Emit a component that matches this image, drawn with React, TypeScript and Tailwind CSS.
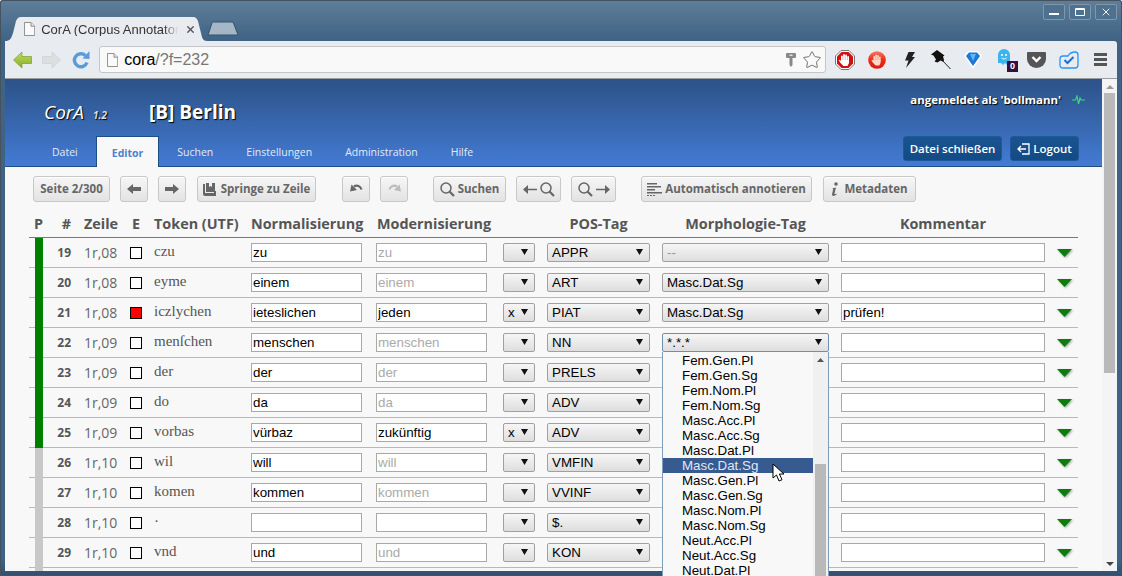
import type { ReactNode } from "react";
import { Star, X } from "lucide-react";

type Row = {
  id: number;
  line: string;
  token: string;
  norm: string;
  mod: string;
  modSet?: boolean;
  flag?: string;
  pos: string;
  morph?: string;
  morphMuted?: boolean;
  checked?: boolean;
  done?: boolean;
  comment?: string;
  open?: boolean;
};

const rows: Row[] = [
  { id: 19, line: "1r,08", token: "czu", norm: "zu", mod: "zu", pos: "APPR", morph: "--", morphMuted: true, done: true },
  { id: 20, line: "1r,08", token: "eyme", norm: "einem", mod: "einem", pos: "ART", morph: "Masc.Dat.Sg", done: true },
  { id: 21, line: "1r,08", token: "iczlychen", norm: "ieteslichen", mod: "jeden", modSet: true, flag: "x", pos: "PIAT", morph: "Masc.Dat.Sg", checked: true, done: true, comment: "prüfen!" },
  { id: 22, line: "1r,09", token: "menſchen", norm: "menschen", mod: "menschen", pos: "NN", morph: "*.*.*", done: true, open: true },
  { id: 23, line: "1r,09", token: "der", norm: "der", mod: "der", pos: "PRELS", done: true },
  { id: 24, line: "1r,09", token: "do", norm: "da", mod: "da", pos: "ADV", done: true },
  { id: 25, line: "1r,09", token: "vorbas", norm: "vürbaz", mod: "zukünftig", modSet: true, flag: "x", pos: "ADV", done: true },
  { id: 26, line: "1r,10", token: "wil", norm: "will", mod: "will", pos: "VMFIN" },
  { id: 27, line: "1r,10", token: "komen", norm: "kommen", mod: "kommen", pos: "VVINF" },
  { id: 28, line: "1r,10", token: "·", norm: "", mod: "", pos: "$." },
  { id: 29, line: "1r,10", token: "vnd", norm: "und", mod: "und", pos: "KON" },
];

const morphOptions = [
  "Fem.Gen.Pl", "Fem.Gen.Sg", "Fem.Nom.Pl", "Fem.Nom.Sg", "Masc.Acc.Pl", "Masc.Acc.Sg", "Masc.Dat.Pl", "Masc.Dat.Sg",
  "Masc.Gen.Pl", "Masc.Gen.Sg", "Masc.Nom.Pl", "Masc.Nom.Sg", "Neut.Acc.Pl", "Neut.Acc.Sg", "Neut.Dat.Pl",
];

function Select({ value, width, muted, focus }: { value?: string; width: string; muted?: boolean; focus?: boolean }) {
  return (
    <div
      className={`${width} h-[19px] shrink-0 flex items-center justify-between pl-[4px] pr-[6px] rounded-[2px] border bg-gradient-to-b from-[#f6f6f6] to-[#dedede] text-[13.33px] leading-none font-['Liberation_Sans',sans-serif] ${
        focus ? "border-[#6f8fb0]" : "border-[#a0a0a0]"
      } ${muted ? "text-[#999]" : "text-black"}`}
    >
      <span>{value}</span>
      <svg width="7" height="6" viewBox="0 0 7 6" className="shrink-0 -mt-[2px]">
        <path d="M0 0h7L3.500 6z" fill="#111" />
      </svg>
    </div>
  );
}

function TextField({ value, width, muted }: { value: string; width: string; muted?: boolean }) {
  return (
    <input
      readOnly
      value={value}
      className={`${width} h-[19px] shrink-0 px-[1px] bg-white border border-[#a9a9a9] text-[13.33px] outline-none font-['Liberation_Sans',sans-serif] ${
        muted ? "text-[#aaa]" : "text-black"
      }`}
    />
  );
}

function MorphDropdown() {
  return (
    <div className="absolute left-0 top-[19px] w-[167px] h-[230px] flex bg-[#f8f8f8] border border-t-0 border-[#7f9db9] text-[13.33px] leading-[15px] text-black font-['Liberation_Sans',sans-serif] z-10">
      <ul className="w-[150px] h-full pt-px overflow-hidden">
        {morphOptions.map((o) => (
          <li
            key={o}
            className={`h-[15px] pl-[19px] ${o === "Masc.Dat.Sg" ? "bg-[#375a91] text-[#dfe8f7]" : ""}`}
          >
            {o}
          </li>
        ))}
      </ul>
      <div className="w-[15px] h-full flex flex-col items-center bg-[#f0f0f0]">
        <svg width="7" height="4" viewBox="0 0 7 4" className="mt-[6px]">
          <path d="M0 4L3.500 0 7 4z" fill="#555" />
        </svg>
        <div className="w-[11px] flex-1 mt-[102px] bg-[#b9b9b9]" />
      </div>
      <svg width="13" height="20" viewBox="0 0 13 20" className="absolute left-[109px] top-[111px] z-20">
        <path d="M1 1v14l3.500-3 2.500 6 3-1.300-2.600-5.700H12z" fill="#fff" stroke="#000" strokeWidth="1" />
      </svg>
    </div>
  );
}

function TableRow({ row }: { row: Row }) {
  return (
    <div className="flex items-center h-[30px] pl-[6px] border-b border-[#b8b8b8]">
      <div className={`w-[8px] self-stretch -mb-px ${row.done ? "bg-[#008000]" : "bg-[#c8c8c8]"}`} />
      <div className="w-[28px] text-right text-[12px] font-bold text-[#555]">{row.id}</div>
      <div className="w-[33px] ml-[13px] text-[14px] text-[#666]">{row.line}</div>
      <div className={`w-[12px] h-[12px] ml-[13px] border border-black ${row.checked ? "bg-[#ff0000]" : "bg-white"}`} />
      <div className="w-[97px] ml-[12px] -mt-[3px] text-[15px] text-[#555] font-['Liberation_Serif',serif]">{row.token}</div>
      <TextField value={row.norm} width="w-[111px]" />
      <div className="w-[14px]" />
      <TextField value={row.mod} width="w-[111px]" muted={!row.modSet} />
      <div className="w-[16px]" />
      <Select value={row.flag} width="w-[32px]" />
      <div className="w-[12px]" />
      <Select value={row.pos} width="w-[103px]" />
      <div className="w-[12px]" />
      <div className="relative w-[167px] h-[19px] shrink-0">
        {row.morph && <Select value={row.morph} width="w-[167px]" muted={row.morphMuted} focus={row.open} />}
        {row.open && <MorphDropdown />}
      </div>
      <div className="w-[12px]" />
      <TextField value={row.comment ?? ""} width="w-[204px]" />
      <svg width="15" height="8" viewBox="0 0 15 8" className="ml-[12px] shrink-0 drop-shadow-[1px_1px_1px_rgba(0,0,0,0.35)]">
        <path d="M0 0h15L7.500 8z" fill="#0b7d0b" />
      </svg>
    </div>
  );
}

function ToolButton({ width, gap = "gap-[3px]", children }: { width: string; gap?: string; children: ReactNode }) {
  return (
    <div
      className={`${width} ${gap} h-[26px] flex items-center justify-center rounded-[3px] border border-[#c8c8c8] bg-gradient-to-b from-[#f6f6f6] to-[#e3e3e3] text-[11.5px] font-bold text-[#666] whitespace-nowrap shadow-[inset_0_1px_0_#fff]`}
    >
      {children}
    </div>
  );
}

const ArrowIcon = ({ dir }: { dir: "left" | "right" }) => (
  <svg width="14" height="10" viewBox="0 0 14 10">
    <path d={dir === "left" ? "M0 5l6-5v3h8v4H6v3z" : "M14 5L8 0v3H0v4h8v3z"} fill="#666" />
  </svg>
);

const SearchIcon = () => (
  <svg width="15" height="15" viewBox="0 0 15 15" fill="none" stroke="#666" strokeWidth="1.500">
    <circle cx="6" cy="6" r="5" />
    <path d="M9.500 9.500L14 14" strokeWidth="2.200" />
  </svg>
);

const ThinArrow = ({ dir }: { dir: "left" | "right" }) => (
  <svg width="14" height="9" viewBox="0 0 14 9">
    <path d={dir === "left" ? "M0 4.500L5 0v3.700h9v1.600H5V9z" : "M14 4.500L9 0v3.700H0v1.600h9V9z"} fill="#666" />
  </svg>
);

const UndoIcon = ({ flip, color }: { flip?: boolean; color: string }) => (
  <svg width="13" height="12" viewBox="0 0 13 12" className={flip ? "-scale-x-100" : ""} fill="none">
    <path d="M11.500 6.500C10.500 3 7 1.500 4 3.500" stroke={color} strokeWidth="2.200" />
    <path d="M0 8.500L1.500 1.500 7 7z" fill={color} />
  </svg>
);

function DocIcon({ size }: { size: number }) {
  return (
    <svg width={size * 0.8} height={size} viewBox="0 0 12 15" className="shrink-0">
      <path d="M.5.500h7l4 4v10H.500z" fill="#fafafa" stroke="#888" />
      <path d="M7.500.500v4h4" fill="#e8e8e8" stroke="#888" />
    </svg>
  );
}

// open hand used by the two blocker icons, drawn in a 20x20 box
function Hand({ fill }: { fill: string }) {
  return (
    <g fill={fill}>
      <rect x="6" y="5.500" width="1.800" height="6" rx="0.900" />
      <rect x="8.100" y="4" width="1.800" height="7" rx="0.900" />
      <rect x="10.200" y="4.500" width="1.800" height="7" rx="0.900" />
      <rect x="12.300" y="6" width="1.700" height="6" rx="0.850" />
      <path d="M6 10h8v3l-1.500 3h-4L5.500 13 3.800 10.500l1-.8L6 11z" />
    </g>
  );
}

function ChromeExtensions() {
  return (
    <div className="flex items-center h-full shrink-0">
      {/* stop sign */}
      <svg width="20" height="20" viewBox="0 0 20 20" className="ml-[9px]">
        <path d="M6 .500h8L19.500 6v8L14 19.500H6L.500 14V6z" fill="#fff" stroke="#777" />
        <path d="M6.500 2h7L18 6.500v7L13.500 18h-7L2 13.500v-7z" fill="#d40f0f" />
        <Hand fill="#fff" />
      </svg>
      {/* red hand */}
      <svg width="18" height="18" viewBox="0 0 20 20" className="ml-[13px]">
        <defs>
          <linearGradient id="redHand" x1="0" y1="0" x2="0" y2="1">
            <stop offset="0" stopColor="#f47a60" />
            <stop offset="0.5" stopColor="#ee2a18" />
            <stop offset="1" stopColor="#d81a10" />
          </linearGradient>
        </defs>
        <circle cx="10" cy="10" r="9.800" fill="url(#redHand)" />
        <Hand fill="#ffd8cc" />
      </svg>
      {/* bolt */}
      <svg width="10" height="16" viewBox="0 0 10 16" className="ml-[19px]">
        <path d="M3.500 0H10L7 5h3L1 16l2.500-7.500H0z" fill="#222" />
      </svg>
      {/* pin */}
      <svg width="20" height="20" viewBox="0 0 20 20" className="ml-[16px]">
        <path d="M6 0L0 4.500l2.500 1 2.500 4-1.500 2 3 1 3-2 3 1.500 .5-2-1-3.500 1.500-1z" fill="#111" />
        <path d="M10 9l9.500 10" stroke="#222" strokeWidth="1" />
      </svg>
      {/* diamond */}
      <svg width="18" height="19" viewBox="0 0 18 19" className="ml-[13px]">
        <path d="M4 1h10l4 5-9 13L0 6z" fill="#fff" />
        <path d="M5 2.500h8L16 6l-7 10L2 6z" fill="#1b78d8" />
        <path d="M6 4h6L9 11z" fill="#63b6f5" />
      </svg>
      {/* ghost with badge */}
      <div className="relative w-[22px] h-[24px] ml-[15px]">
        <svg width="14" height="18" viewBox="0 0 14 18" className="absolute left-0 top-0">
          <path d="M1 7a6 6 0 0112 0v8h-1.500l-1.500 2-2-2-2 2-2-2H1z" fill="#3cb4ee" />
          <circle cx="5" cy="7" r="1" fill="#fff" />
          <circle cx="9" cy="7" r="1" fill="#fff" />
          <path d="M4.500 10c1.500 1.300 3.500 1.300 5 0" stroke="#fff" fill="none" />
        </svg>
        <div className="absolute left-[10px] top-[13px] w-[11px] h-[11px] bg-[#35103f] text-white text-[9px] leading-[11px] text-center font-bold font-['Liberation_Sans',sans-serif]">
          0
        </div>
      </div>
      {/* pocket */}
      <svg width="19" height="17" viewBox="0 0 19 17" className="ml-[8px]">
        <path d="M0 2a1 1 0 011-1h17a1 1 0 011 1v6a9.500 9 0 01-19 0z" fill="#555" />
        <path d="M5.500 6l4 4 4-4" stroke="#fff" strokeWidth="2.400" fill="none" />
      </svg>
      {/* check */}
      <svg width="20" height="20" viewBox="0 0 20 20" className="ml-[13px]" fill="none">
        <path d="M1 9c0-2 1-3 3-3h5c1.500-2.500 4-4 7-4 2 0 3 1 3 3v10c0 2-1 3-3 3H4c-2 0-3-1-3-3z" stroke="#2b93f2" strokeWidth="1.300" />
        <path d="M5.500 10l3 3 6-6" stroke="#1f6fd8" strokeWidth="2" />
      </svg>
      {/* menu */}
      <div className="w-[13px] ml-[15px] flex flex-col gap-[2px]">
        <div className="h-[3px] bg-[#555]" />
        <div className="h-[3px] bg-[#555]" />
        <div className="h-[3px] bg-[#555]" />
      </div>
    </div>
  );
}

function WindowButton({ children }: { children: ReactNode }) {
  return (
    <div className="w-[22px] h-[16px] flex items-center justify-center rounded-[2px] border border-[#7e97ad] bg-[#4f7190] text-white">
      {children}
    </div>
  );
}

function ChromeBar() {
  return (
    <div className="shrink-0 font-['Liberation_Sans',sans-serif]">
      {/* tab strip */}
      <div className="flex items-end h-[41px] pl-[5px] pr-[5px]">
        <div className="relative w-[206px] h-[24px] flex items-center">
          <svg width="206" height="24" viewBox="0 0 206 24" className="absolute inset-0">
            <path d="M0 24c5 0 6-2 8-8l3-12c1-2 2-4 5-4h172c3 0 4 2 5 4l3 12c1 5 2 8 6 8z" fill="#e8ebf0" />
          </svg>
          <div className="relative flex items-center pl-[19px]">
            <DocIcon size={14} />
            <span className="w-[137px] ml-[6px] text-[13px] leading-none text-[#333] overflow-hidden whitespace-nowrap [mask-image:linear-gradient(90deg,#000_90%,transparent)]">CorA (Corpus Annotator)</span>
            <X size={11} strokeWidth={3} className="ml-[7px] text-[#555]" />
          </div>
        </div>
        <svg width="32" height="15" viewBox="0 0 32 15" className="-ml-[4px] mb-[5px]">
          <path d="M1 14L5 2c.300-1 1-1 2-1h17c1 0 2 0 2.500 1L31 14z" fill="#a5b6c7" stroke="#34536f" />
        </svg>
        <div className="ml-auto mb-[21px] flex gap-[4px]">
          <WindowButton>
            <div className="w-[10px] h-[2px] mt-[3px] bg-white" />
          </WindowButton>
          <WindowButton>
            <div className="w-[10px] h-[8px] rounded-[1px] border border-t-2 border-white" />
          </WindowButton>
          <WindowButton><X size={12} strokeWidth={1.800} /></WindowButton>
        </div>
      </div>
      {/* address bar */}
      <div className="flex items-center h-[38px] pl-[8px] mx-[5px] bg-[#e8ebf0] border-b border-[#9a9ea3] rounded-tr-[3px]">
        <svg width="19" height="18" viewBox="0 0 19 18" className="shrink-0">
          <defs>
            <linearGradient id="backArrow" x1="0" y1="0" x2="0" y2="1">
              <stop offset="0" stopColor="#c3dc62" />
              <stop offset="1" stopColor="#84ac26" />
            </linearGradient>
          </defs>
          <path d="M.5 9L9 1v4.500h9.500v7H9V17z" fill="url(#backArrow)" stroke="#7b9d2c" strokeWidth="0.700" />
        </svg>
        <svg width="19" height="18" viewBox="0 0 19 18" className="ml-[10px] shrink-0">
          <path d="M18.500 9L10 1v4.500H.5v7H10V17z" fill="#dcdee0" stroke="#cfd1d3" strokeWidth="0.700" />
        </svg>
        <svg width="18" height="18" viewBox="0 0 18 18" className="ml-[11px] shrink-0" fill="none">
          <path d="M15 11.500a6.500 6.500 0 11-1.600-7" stroke="#5a9bd8" strokeWidth="3.400" />
          <path d="M10.500 7.500L17.500 0v8z" fill="#5a9bd8" />
        </svg>
        <div className="w-[727px] h-[27px] ml-[9px] flex items-center pl-[7px] pr-[3px] bg-[#f9f9f9] border border-[#c4c6c9] rounded-[3px] shrink-0">
          <DocIcon size={14} />
          <span className="ml-[6px] text-[16px] leading-none whitespace-nowrap">
            <span className="text-black">cora</span>
            <span className="text-[#777]">/?f=232</span>
          </span>
          <svg width="10" height="14" viewBox="0 0 10 14" className="ml-auto shrink-0">
            <path d="M1 0h8a1 1 0 011 1v3a1 1 0 01-1 1H6.500v7L5 14l-1.500-2V5H1a1 1 0 01-1-1V1a1 1 0 011-1z" fill="#888" />
            <rect x="3.500" y="1.500" width="3" height="1.500" fill="#e0e0e0" />
          </svg>
          <Star size={20} strokeWidth={1.100} className="ml-[6px] text-[#666]" />
        </div>
        <ChromeExtensions />
      </div>
    </div>
  );
}

function HeaderCell({ width, className, children }: { width: string; className?: string; children: ReactNode }) {
  return <div className={`${width} shrink-0 ${className ?? ""}`}>{children}</div>;
}

const navTabs = ["Datei", "Editor", "Suchen", "Einstellungen", "Administration", "Hilfe"];

export default function App() {
  return (
    <div className="relative w-[1122px] h-[576px] overflow-hidden flex flex-col rounded-t-[3px] shadow-[inset_0_0_0_1px_#46525e] bg-[linear-gradient(#5f7e99_0,#3f6384_41px,#3f6384_560px,#2f4f6f_100%)] font-['Open_Sans',sans-serif]">
      <ChromeBar />
      <div className="flex flex-1 min-h-0 mx-[5px] mb-[5px]">
        <div className="w-[1097px] flex flex-col bg-[#f8f8f8]">
          {/* app header */}
          <div className="relative h-[88px] shrink-0 flex flex-col bg-gradient-to-b from-[#2c5288] to-[#437bd4] border-b border-[#1f4d85]">
            <div className="flex items-baseline pt-[20px] pl-[39px] text-white [text-shadow:1px_1px_1px_#000]">
              <span className="text-[19px] italic leading-[26px]">CorA</span>
              <span className="w-[56px] ml-[9px] text-[10px] font-bold italic text-[#ddd]">1.2</span>
              <span className="text-[19px] font-bold leading-[26px]">[B] Berlin</span>
              <div className="ml-auto mr-[17px] -translate-y-[15px] flex items-center gap-[11px] text-[11.45px] font-bold">
                <span>angemeldet als 'bollmann'</span>
                <svg width="13" height="10" viewBox="0 0 13 10" fill="none">
                  <path d="M0 5h3.500l1.500-4 1.500 8 1.500-6 1 2H13" stroke="#39d67e" strokeWidth="1.200" />
                </svg>
              </div>
            </div>
            <div className="flex items-end flex-1 pl-[31px] pr-[23px] gap-[1px]">
              {navTabs.map((t) =>
                t === "Editor" ? (
                  <div key={t} className="h-[31px] -mb-px ml-[1px] mr-px pl-[15px] pr-[15px] pt-[3px] flex items-center bg-[#f8f8f8] border border-b-0 border-[#1f4d85] text-[10.5px] font-bold text-[#4c80d0]">
                    {t}
                  </div>
                ) : (
                  <div key={t} className="h-[30px] px-[16px] pt-[3px] flex items-center text-[10.5px] text-[#e3ebf7]">
                    {t}
                  </div>
                ),
              )}
              <div className="ml-auto mb-[5px] flex gap-[8px] text-[11.5px] font-semibold text-white">
                <div className="w-[99px] h-[25px] flex items-center justify-center rounded-[3px] border border-[#1c5a9a] bg-gradient-to-b from-[#1a5490] to-[#144a85]">Datei schließen</div>
                <div className="w-[69px] h-[25px] flex items-center justify-center gap-[3px] rounded-[3px] border border-[#1c5a9a] bg-gradient-to-b from-[#1a5490] to-[#144a85]">
                  <svg width="13" height="12" viewBox="0 0 13 12" fill="none" stroke="#fff" strokeWidth="1.300">
                    <path d="M5 1h7v10H5M9 6H1M4 3L1 6l3 3" />
                  </svg>
                  Logout
                </div>
              </div>
            </div>
          </div>

          {/* editor toolbar */}
          <div className="flex items-center gap-[10px] h-[26px] mt-[9px] ml-[28px] shrink-0">
            <ToolButton width="w-[77px]">Seite 2/300</ToolButton>
            <ToolButton width="w-[28px]"><ArrowIcon dir="left" /></ToolButton>
            <ToolButton width="w-[28px]"><ArrowIcon dir="right" /></ToolButton>
            <div className="ml-px">
              <ToolButton width="w-[119px]" gap="gap-[5px]">
                <svg width="13" height="13" viewBox="0 0 13 13">
                  <path d="M0 1h2v9h9V8h2v5H2a2 2 0 01-2-2zM3 0h3v4l1.500-1L9 4V0h3v9H3z" fill="#666" />
                </svg>
                Springe zu Zeile
              </ToolButton>
            </div>
            <div className="ml-[16px]">
              <ToolButton width="w-[28px]"><UndoIcon color="#666" /></ToolButton>
            </div>
            <ToolButton width="w-[28px]"><UndoIcon flip color="#bbb" /></ToolButton>
            <div className="ml-[15px]">
              <ToolButton width="w-[73px]"><SearchIcon />Suchen</ToolButton>
            </div>
            <ToolButton width="w-[45px]"><ThinArrow dir="left" /><SearchIcon /></ToolButton>
            <ToolButton width="w-[45px]"><SearchIcon /><ThinArrow dir="right" /></ToolButton>
            <div className="ml-[15px]">
              <ToolButton width="w-[171px]">
                <svg width="15" height="13" viewBox="0 0 15 13" fill="#666">
                  <path d="M0 0h10v1.500H0zM0 3h14v1.500H0zM0 6h8v1.500H0zM0 9h15v1.500H0zM0 12h2v1H0zM3 12h2v1H3zM6 12h2v1H6z" />
                </svg>
                Automatisch annotieren
              </ToolButton>
            </div>
            <div className="ml-px">
              <ToolButton width="w-[93px]" gap="gap-[5px]">
                <svg width="8" height="15" viewBox="0 0 8 15" fill="#666">
                  <circle cx="5" cy="2" r="1.800" />
                  <path d="M1 6.500L5 5.500 3.500 11.500c-.2 1 .5 1 2.500 0-1 2.500-5 3.500-5 1l1.200-5.500z" />
                </svg>
                Metadaten
              </ToolButton>
            </div>
          </div>

          {/* table */}
          <div className="w-[1049px] ml-[24px] mt-[13px] shrink-0">
            <div className="flex items-center h-[23px] pb-[5px] pl-[6px] border-b border-[#777] text-[14.4px] font-bold text-[#555] whitespace-nowrap">
              <HeaderCell width="w-[8px]" className="-ml-px">P</HeaderCell>
              <HeaderCell width="w-[28px]" className="ml-px text-right">#</HeaderCell>
              <HeaderCell width="w-[33px]" className="ml-[13px]">Zeile</HeaderCell>
              <HeaderCell width="w-[12px]" className="ml-[13px] text-center">E</HeaderCell>
              <HeaderCell width="w-[97px]" className="ml-[12px]">Token (UTF)</HeaderCell>
              <HeaderCell width="w-[111px]">Normalisierung</HeaderCell>
              <HeaderCell width="w-[111px]" className="ml-[14px] pl-px">Modernisierung</HeaderCell>
              <HeaderCell width="w-[147px]" className="ml-[16px] pl-[44px] pr-0 text-center">POS-Tag</HeaderCell>
              <HeaderCell width="w-[167px]" className="ml-[12px] text-center">Morphologie-Tag</HeaderCell>
              <HeaderCell width="w-[204px]" className="ml-[12px] text-center">Kommentar</HeaderCell>
            </div>
            {rows.map((row) => (
              <TableRow key={row.id} row={row} />
            ))}
            <div className="ml-[6px] w-[8px] h-[3px] bg-[#c8c8c8]" />
          </div>
        </div>

        {/* page scrollbar */}
        <div className="w-[15px] flex flex-col items-center bg-[#f4f4f4]">
          <svg width="8" height="4" viewBox="0 0 8 4" className="mt-[6px]">
            <path d="M0 4L4 0l4 4z" fill="#999" />
          </svg>
          <div className="w-[11px] h-[280px] mt-[4px] bg-[#b9b9b9]" />
          <svg width="8" height="4" viewBox="0 0 8 4" className="mt-auto mb-[5px]">
            <path d="M0 0l4 4 4-4z" fill="#444" />
          </svg>
        </div>
      </div>
    </div>
  );
}
